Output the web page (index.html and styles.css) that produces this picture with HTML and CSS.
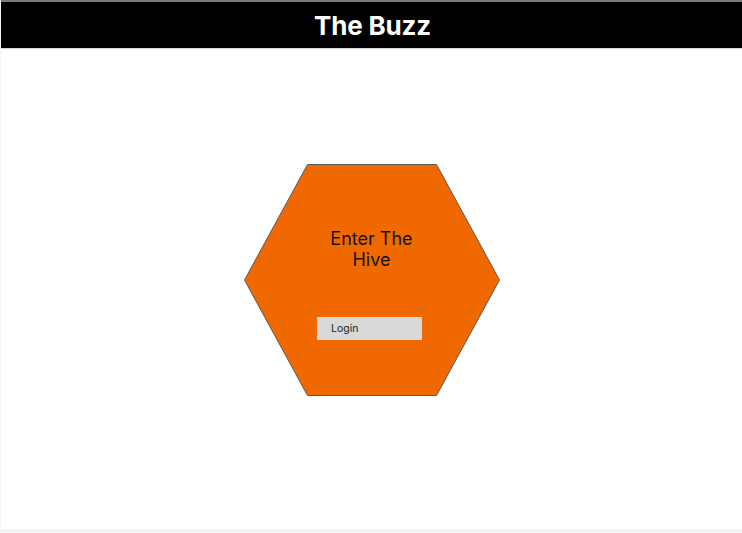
FILE: index.html
```html
<!DOCTYPE html>
<html>
<head>
<meta charset="utf-8">
<link rel="stylesheet" href="styles.css">
</head>
<body>
<div class="frame">
  <header class="topbar"><h1 class="title">The Buzz</h1></header>
  <main class="stage">
    <div class="hive">
      <svg class="hive-shape" width="256" height="232" viewBox="0 0 256 232">
        <polygon points="63.5,0.5 192.5,0.5 255.5,116 192.5,231.5 63.5,231.5 0.5,116" fill="#f06800" stroke="#5a5a5a" stroke-width="1"/>
      </svg>
      <p class="hive-text">Enter The<br>Hive</p>
      <button class="login">Login</button>
    </div>
  </main>
</div>
</body>
</html>
```
FILE: styles.css
```css
html, body {
  margin: 0;
  padding: 0;
}
body {
  background: #f3f3f3;
  font-family: Inter, "Noto Sans", sans-serif;
  width: 742px;
  height: 533px;
  overflow: hidden;
}
.frame {
  margin-left: 1px;
  width: 741px;
  height: 529px;
  background: #ffffff;
  display: flex;
  flex-direction: column;
}
.topbar {
  height: 46px;
  background: #000000;
  border-top: 2px solid #7a7a7a;
  border-bottom: 1px solid #d6d6d6;
  display: flex;
  align-items: center;
  justify-content: center;
}
.title {
  margin: 0;
  color: #ffffff;
  font-size: 26px;
  font-weight: 700;
  letter-spacing: -0.2px;
  padding-left: 2px;
}
.stage {
  flex: 1;
  display: flex;
  justify-content: center;
  align-items: flex-start;
  padding-top: 115px;
}
.hive {
  position: relative;
  width: 256px;
  height: 232px;
  display: flex;
  flex-direction: column;
  align-items: center;
}
.hive-shape {
  position: absolute;
  left: 0;
  top: 0;
}
.hive-text {
  position: relative;
  margin: 64px 0 0 0;
  text-align: center;
  font-size: 18px;
  line-height: 21px;
  color: #1a1208;
}
.login {
  position: relative;
  margin-top: 47px;
  margin-right: 4px;
  width: 105px;
  height: 23px;
  border: 0;
  background: #d9d9d9;
  font-family: Inter, "Noto Sans", sans-serif;
  font-size: 10.5px;
  color: #222;
  text-align: left;
  padding: 0 0 0 14px;
}
```
